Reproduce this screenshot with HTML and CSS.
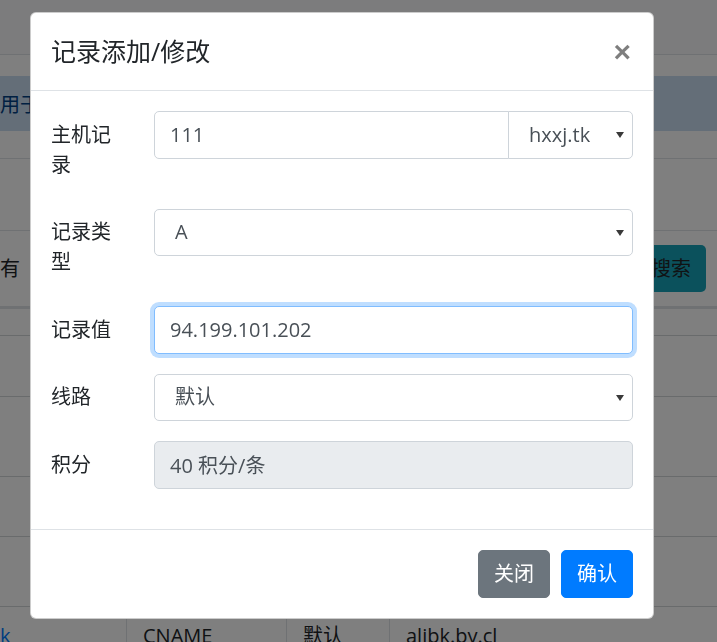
FILE: index.html
```html
<!DOCTYPE html>
<html lang="zh-CN">
<head>
  <meta charset="UTF-8" />
  <meta name="viewport" content="width=device-width, initial-scale=1.0"/>
  <title>记录添加/修改</title>
  <link rel="stylesheet" href="styles.css">
</head>
<body>

  <!-- PAGE BEHIND THE MODAL -->
  <div class="page">
    <div class="navbar"></div>
    <div class="alert">用于添加和修改域名解析记录</div>
    <div class="panel">
      <div class="panel-top"></div>
      <div class="search-row">
        <span>有</span>
        <button class="btn btn-info">搜索</button>
      </div>
    </div>
    <table class="records">
      <tr class="r-head"><td></td><td></td><td></td><td></td></tr>
      <tr class="r1"><td></td><td></td><td></td><td></td></tr>
      <tr class="r2"><td></td><td></td><td></td><td></td></tr>
      <tr class="r3"><td></td><td></td><td></td><td></td></tr>
      <tr class="r4"><td></td><td></td><td></td><td></td></tr>
      <tr class="r5">
        <td><a href="#">k</a></td>
        <td>CNAME</td>
        <td>默认</td>
        <td>alibk.by.cl</td>
      </tr>
    </table>
  </div>

  <!-- MODAL -->
  <div class="modal-backdrop"></div>
  <div class="modal">
    <div class="modal-dialog">
      <div class="modal-header">
        <h5 class="modal-title">记录添加/修改</h5>
        <button class="close" type="button">&times;</button>
      </div>

      <div class="modal-body">
        <div class="form-row">
          <label class="col-label" for="host">主机记录</label>
          <div class="input-group">
            <input type="text" id="host" class="form-control" value="111" />
            <div class="select-wrap domain">
              <select class="form-control">
                <option>hxxj.tk</option>
              </select>
              <svg class="arrow" width="8" height="6" viewBox="0 0 8 6"><path d="M0 0h8L4 6z" fill="#3a3a3a"/></svg>
            </div>
          </div>
        </div>

        <div class="form-row">
          <label class="col-label" for="type">记录类型</label>
          <div class="select-wrap">
            <select id="type" class="form-control">
              <option>A</option>
            </select>
            <svg class="arrow" width="8" height="6" viewBox="0 0 8 6"><path d="M0 0h8L4 6z" fill="#3a3a3a"/></svg>
          </div>
        </div>

        <div class="form-row">
          <label class="col-label" for="value">记录值</label>
          <div class="input-wrap">
            <input type="text" id="value" class="form-control focused" value="94.199.101.202" />
          </div>
        </div>

        <div class="form-row">
          <label class="col-label" for="line">线路</label>
          <div class="select-wrap">
            <select id="line" class="form-control">
              <option>默认</option>
            </select>
            <svg class="arrow" width="8" height="6" viewBox="0 0 8 6"><path d="M0 0h8L4 6z" fill="#3a3a3a"/></svg>
          </div>
        </div>

        <div class="form-row">
          <label class="col-label" for="points">积分</label>
          <div class="input-wrap">
            <input type="text" id="points" class="form-control" value="40 积分/条" readonly />
          </div>
        </div>
      </div>

      <div class="modal-footer">
        <button class="btn btn-secondary">关闭</button>
        <button class="btn btn-primary">确认</button>
      </div>
    </div>
  </div>

</body>
</html>
```

FILE: styles.css
```css
body {
  margin: 0;
  padding: 0;
  background: #fff;
  color: #212529;
  font-family: "Open Sans", "Noto Sans CJK SC", sans-serif;
  font-size: 20px;
  line-height: 1.5;
  overflow: hidden;
}

/* background page */
.page {
  width: 717px;
  height: 642px;
}
.navbar {
  height: 54px;
  background: #f8f9fa;
  border-bottom: 1px solid #dee2e6;
}
.alert {
  margin-top: 21px;
  height: 55px;
  padding-top: 14px;
  box-sizing: border-box;
  background: #c8dcf0;
  color: #004085;
  white-space: nowrap;
}
.panel {
  margin-top: 27px;
  border-top: 1px solid #dee2e6;
  border-bottom: 1px solid #dee2e6;
}
.panel-top {
  height: 71px;
  border-bottom: 1px solid #dee2e6;
}
.search-row {
  display: flex;
  justify-content: space-between;
  align-items: center;
  padding: 14px 11px 14px 0;
}
.records {
  width: 100%;
  border-collapse: collapse;
}
.records td {
  border-top: 1px solid #d3d6d9;
  border-left: 1px solid #dee2e6;
  padding: 14px 16px;
  white-space: nowrap;
}
.records td:first-child {
  width: 110px;
  padding-left: 0;
  border-left: none;
}
.records td:nth-child(2) { width: 127px; }
.records td:nth-child(3) { width: 70px; }
.records .r-head td { height: 26px; padding: 0; border-top: 2px solid #dee2e6; }
.records .r1 td { height: 60px; padding: 0; }
.records .r2 td { height: 79px; padding: 0; }
.records .r3 td { height: 59px; padding: 0; }
.records .r4 td { height: 69px; padding: 0; }
.records a {
  color: #007bff;
  text-decoration: none;
}

/* modal */
.modal-backdrop {
  position: fixed;
  top: 0;
  left: 0;
  right: 0;
  bottom: 0;
  background: rgba(0,0,0,0.5);
}
.modal {
  position: fixed;
  top: 0;
  left: 0;
  right: 0;
  bottom: 0;
}
.modal-dialog {
  width: 624px;
  margin: 12px 0 0 30px;
  background: #fff;
  border: 1px solid rgba(0,0,0,0.2);
  border-radius: 6px;
  box-sizing: border-box;
}
.modal-header {
  display: flex;
  justify-content: space-between;
  align-items: center;
  padding: 20px;
  border-bottom: 1px solid #dee2e6;
}
.modal-title {
  margin: 0;
  font-size: 25px;
  font-weight: 400;
  line-height: 37px;
  color: #212529;
}
.close {
  background: none;
  border: none;
  padding: 0 2px 0 0;
  font-family: "Liberation Sans", sans-serif;
  font-size: 30px;
  font-weight: 700;
  line-height: 1;
  color: #000;
  opacity: 0.5;
}
.modal-body {
  padding: 20px;
}
.form-row {
  display: grid;
  grid-template-columns: 65px 1fr;
  column-gap: 38px;
  margin-bottom: 20px;
}
.col-label {
  padding: 8.75px 0;
  line-height: 30px;
  color: #212529;
}
.form-control {
  display: block;
  width: 100%;
  height: 47.5px;
  box-sizing: border-box;
  padding: 7px 15px;
  font-family: inherit;
  font-size: 20px;
  line-height: 30px;
  color: #495057;
  background: #fff;
  border: 1px solid #ced4da;
  border-radius: 5px;
  outline: none;
}
.form-control.focused {
  border-color: #80bdff;
  box-shadow: 0 0 0 4px rgba(0,123,255,0.25);
}
.form-control[readonly] {
  background: #e9ecef;
}
.input-group {
  display: flex;
}
.input-group > .form-control {
  flex: 1;
  border-radius: 5px 0 0 5px;
}
.select-wrap {
  position: relative;
}
.select-wrap select {
  -webkit-appearance: none;
  appearance: none;
  padding-left: 20px;
  padding-right: 30px;
}
.select-wrap.domain {
  width: 125px;
  margin-left: -1px;
}
.select-wrap.domain select {
  border-radius: 0 5px 5px 0;
}
.arrow {
  position: absolute;
  right: 9px;
  top: 21px;
}
.modal-footer {
  display: flex;
  justify-content: flex-end;
  gap: 11px;
  padding: 20px;
  border-top: 1px solid #dee2e6;
}
.btn {
  padding: 7px 15px;
  font-family: inherit;
  font-size: 20px;
  line-height: 32px;
  color: #fff;
  border: 1px solid transparent;
  border-radius: 5px;
  cursor: pointer;
}
.btn-secondary {
  background: #6c757d;
  border-color: #6c757d;
}
.btn-primary {
  background: #007bff;
  border-color: #007bff;
}
.btn-info {
  background: #17a2b8;
  color: #212529;
  padding: 7px 14px;
  line-height: 31px;
}
```
